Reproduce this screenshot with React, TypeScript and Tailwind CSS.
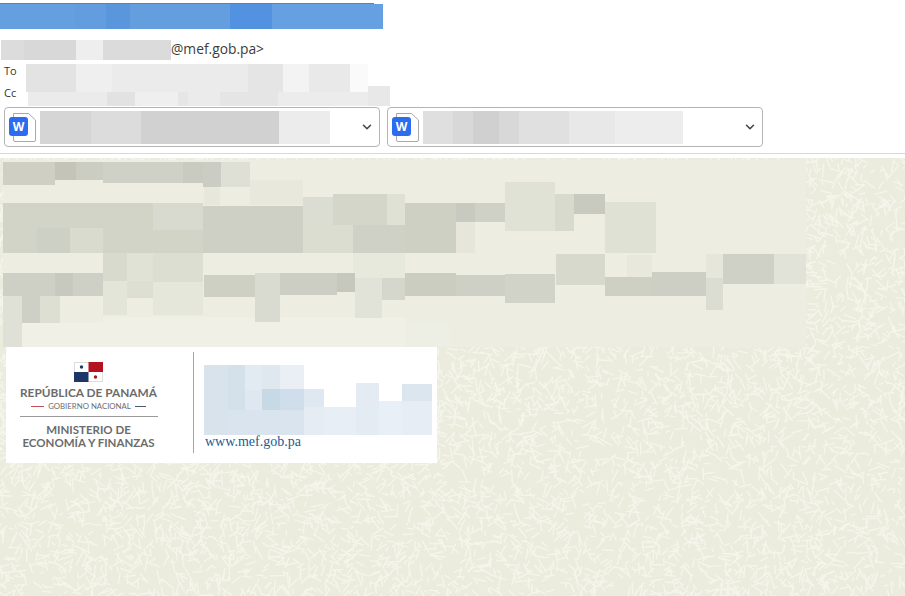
import { useMemo } from "react";
import { ChevronDown } from "lucide-react";

type Cell = [number, number, number, number, string];

function Mosaic({ w, h, cells, className = "" }: { w: number; h: number; cells: Cell[]; className?: string }) {
  return (
    <svg width={w} height={h} viewBox={`0 0 ${w} ${h}`} shapeRendering="crispEdges" className={`block shrink-0 ${className}`}>
      {cells.map(([x, y, cw, ch, c], i) => (
        <rect key={i} x={x} y={y} width={cw} height={ch} fill={c} />
      ))}
    </svg>
  );
}

function Texture() {
  const lines = useMemo(() => {
    let s = 12345;
    const r = () => {
      s = (s * 1664525 + 1013904223) >>> 0;
      return s / 4294967296;
    };
    const out: string[] = [];
    for (let i = 0; i < 9000; i++) {
      const x = r() * 925 - 10;
      const y = r() * 460 - 10;
      const a = r() * Math.PI;
      const l = 4 + r() * 11;
      out.push(`M${x.toFixed(1)} ${y.toFixed(1)}L${(x + Math.cos(a) * l).toFixed(1)} ${(y + Math.sin(a) * l).toFixed(1)}`);
    }
    return out.join("");
  }, []);
  return (
    <svg className="absolute inset-0 w-full h-full" width="905" height="438">
      <path d={lines} stroke="#f4f5eb" strokeWidth="1.4" fill="none" />
    </svg>
  );
}

function WordIcon() {
  return (
    <div className="relative w-[28px] h-[28px] shrink-0">
      <svg width="28" height="30" viewBox="0 0 28 30" className="absolute left-0 top-0">
        <path d="M4.5 0.5H19.5L26.5 7V27a1.5 1.5 0 0 1-1.5 1.5H6a1.5 1.5 0 0 1-1.5-1.5Z" fill="#fff" stroke="#a9a9a9" strokeWidth="1" />
      </svg>
      <div className="absolute left-0 top-[4px] w-[19px] h-[19px] rounded-[3px] bg-[#2b6cf0] text-white text-[12px] leading-[19px] font-bold text-center font-['Open_Sans',sans-serif]">
        W
      </div>
    </div>
  );
}

function Attachment({ cells, mosaicW, mosaicGap }: { cells: Cell[]; mosaicW: number; mosaicGap: number }) {
  return (
    <div className="relative w-[376px] h-[40px] border border-[#b4b4b4] rounded-[4px] bg-white flex items-center pl-[4px]">
      <div className="-mt-[1px]">
        <WordIcon />
      </div>
      <div style={{ marginLeft: mosaicGap }}>
        <Mosaic w={mosaicW} h={33} cells={cells} />
      </div>
      <ChevronDown className="absolute right-[5px] top-[12px] text-[#444]" size={14} strokeWidth={2.6} />
    </div>
  );
}

const banner: Cell[] = [
  [0, 1, 75, 25, "#669fe0"],
  [75, 1, 31, 25, "#639de0"],
  [106, 1, 24, 25, "#5a96dc"],
  [130, 1, 100, 25, "#649edf"],
  [230, 1, 42, 25, "#5392e0"],
  [272, 1, 111, 25, "#669fe2"],
  [0, 0, 374, 1, "#4a86c8"],
];
const sender: Cell[] = [
  [0, 0, 23, 20, "#dcdcdc"],
  [23, 0, 52, 20, "#d8d8d8"],
  [75, 0, 27, 20, "#eeeeee"],
  [102, 0, 68, 20, "#dbdbdb"],
];
const to: Cell[] = [
  [0, 0, 50, 28, "#e3e3e3"],
  [50, 0, 36, 28, "#efefef"],
  [86, 0, 136, 28, "#ebebeb"],
  [222, 0, 35, 28, "#e5e5e5"],
  [257, 0, 26, 28, "#f3f3f3"],
  [283, 0, 41, 28, "#e9e9e9"],
  [324, 0, 18, 28, "#fafafa"],
  [342, 22, 22, 6, "#e8e8e8"],
];
const cc: Cell[] = [
  [0, 0, 362, 14, "#ebebeb"],
  [79, 0, 28, 14, "#e2e2e2"],
  [107, 0, 43, 14, "#efefef"],
  [150, 0, 10, 14, "#e6e6e6"],
  [192, 0, 58, 14, "#e5e5e5"],
  [250, 0, 90, 14, "#ececec"],
  [340, 0, 22, 14, "#e8e8e8"],
];
const att1: Cell[] = [
  [0, 0, 51, 33, "#d5d5d5"],
  [51, 0, 50, 33, "#dcdcdc"],
  [101, 0, 138, 33, "#d1d1d1"],
  [239, 0, 51, 33, "#ececec"],
];
const att2: Cell[] = [
  [0, 0, 30, 33, "#dfdfdf"],
  [30, 0, 20, 33, "#d8d8d8"],
  [50, 0, 26, 33, "#d0d0d0"],
  [76, 0, 20, 33, "#d8d8d8"],
  [96, 0, 50, 33, "#e0e0e0"],
  [146, 0, 46, 33, "#e8e8e8"],
  [192, 0, 68, 33, "#ededed"],
];

// absolute page coordinates, shifted to the panel's origin (3,160)
const bodyAbs: Cell[] = [
  [3, 160, 803, 187, "#edeee1"],
  [22, 323, 383, 24, "#f0f0e6"],
  [405, 323, 45, 24, "#eeefe4"],
  [103, 317, 302, 6, "#f0f0e6"],
  [3, 162, 52, 23, "#cfcfc4"],
  [55, 162, 21, 18, "#c4c4b8"],
  [76, 162, 27, 18, "#cbccc2"],
  [103, 162, 80, 21, "#d0d1c6"],
  [183, 162, 20, 21, "#c9cac0"],
  [203, 162, 18, 25, "#cbccc3"],
  [221, 162, 29, 25, "#dee0d6"],
  [204, 187, 16, 18, "#e7e7dc"],
  [250, 180, 53, 25, "#e8e8dc"],
  [3, 203, 200, 50, "#d3d4c8"],
  [37, 228, 33, 25, "#cdd0c5"],
  [70, 228, 33, 25, "#dadbcf"],
  [153, 203, 50, 27, "#d9dacf"],
  [203, 206, 100, 47, "#cfd0c5"],
  [303, 203, 153, 50, "#d2d3c7"],
  [303, 197, 30, 28, "#dcddd2"],
  [333, 194, 54, 31, "#d5d6ca"],
  [387, 194, 18, 31, "#e0e1d5"],
  [303, 225, 50, 28, "#dcddd1"],
  [353, 225, 52, 28, "#cfd1c6"],
  [405, 203, 51, 50, "#cfd0c4"],
  [456, 203, 19, 19, "#c9cabf"],
  [475, 203, 30, 19, "#d0d1c6"],
  [456, 222, 19, 31, "#e6e6da"],
  [505, 182, 50, 49, "#e1e2d6"],
  [555, 194, 19, 37, "#d9dace"],
  [574, 194, 31, 20, "#c9cabf"],
  [605, 202, 51, 51, "#e0e1d5"],
  [103, 253, 24, 28, "#d8dace"],
  [127, 253, 26, 29, "#e1e2d6"],
  [153, 253, 50, 29, "#dcded2"],
  [353, 253, 52, 25, "#e8e9dd"],
  [3, 273, 100, 23, "#cfd0c5"],
  [55, 273, 18, 23, "#c8c9be"],
  [103, 281, 24, 34, "#e4e5d9"],
  [127, 281, 26, 17, "#dddfd3"],
  [153, 282, 50, 33, "#e6e7db"],
  [204, 275, 51, 22, "#cfd0c4"],
  [255, 273, 25, 49, "#d9dad0"],
  [280, 273, 57, 22, "#cdcec3"],
  [337, 273, 18, 19, "#c7c8bd"],
  [355, 278, 27, 40, "#e2e3d8"],
  [382, 278, 23, 22, "#d6d7cc"],
  [405, 273, 51, 23, "#cccdc1"],
  [456, 275, 49, 21, "#cfd0c5"],
  [505, 274, 50, 29, "#d2d3c8"],
  [556, 254, 49, 31, "#d8d9cd"],
  [605, 277, 47, 19, "#cfd0c4"],
  [627, 255, 25, 22, "#e8e8dc"],
  [652, 272, 54, 24, "#cecfc4"],
  [706, 254, 17, 24, "#e6e6da"],
  [706, 278, 17, 32, "#dcddd2"],
  [723, 254, 51, 30, "#d0d1c6"],
  [774, 254, 32, 30, "#e2e3d8"],
  [3, 296, 19, 51, "#e0e1d6"],
  [22, 296, 18, 27, "#cfd0c5"],
  [40, 296, 20, 27, "#dddfd3"],
];
const body: Cell[] = bodyAbs.map(([x, y, w, h, c]) => [x - 3, y - 160, w, h, c]);

const sigMosaic: Cell[] = [
  [0, 0, 228, 70, "#ffffff"],
  [0, 0, 24, 70, "#d8e3ec"],
  [24, 0, 17, 45, "#d4e1ea"],
  [24, 45, 76, 25, "#d9e4ee"],
  [41, 0, 17, 25, "#e3ebf2"],
  [58, 0, 18, 25, "#dfe8ef"],
  [76, 0, 24, 24, "#e9eff4"],
  [41, 25, 17, 20, "#dfe8f0"],
  [58, 24, 18, 21, "#c8d9e6"],
  [76, 24, 24, 21, "#cfdeea"],
  [100, 24, 20, 18, "#dfe8f0"],
  [100, 42, 20, 28, "#e5ecf3"],
  [120, 42, 32, 28, "#e8eef5"],
  [152, 18, 23, 24, "#e4ebf2"],
  [152, 42, 23, 28, "#e3ebf3"],
  [175, 36, 23, 34, "#e9eff6"],
  [198, 19, 30, 17, "#dbe6ef"],
  [198, 36, 30, 34, "#e6edf5"],
];

export default function App() {
  return (
    <div className="w-[905px] h-[596px] bg-white flex flex-col overflow-hidden font-['Open_Sans',sans-serif]">
      <header className="h-[153px] shrink-0 pt-[3px] flex flex-col">
        <Mosaic w={383} h={26} cells={banner} />
        <div className="flex items-start h-[20px] mt-[11px] pl-[1px] text-[13.8px] leading-[18px] text-[#3c3c3c]">
          <Mosaic w={170} h={20} cells={sender} />
          <span>@mef.gob.pa&gt;</span>
        </div>
        <div className="flex h-[29px] mt-[3px]">
          <span className="w-[26px] pl-[4px] text-[11px] leading-[16px] text-[#333] shrink-0">To</span>
          <Mosaic w={364} h={28} cells={to} className="mt-[1px]" />
        </div>
        <div className="flex h-[14px]">
          <span className="w-[28px] pl-[4px] text-[11px] leading-[2px] text-[#333] shrink-0">Cc</span>
          <Mosaic w={362} h={14} cells={cc} />
        </div>
        <div className="flex gap-[7px] pl-[4px] mt-[1px]">
          <Attachment cells={att1} mosaicW={290} mosaicGap={3} />
          <Attachment cells={att2} mosaicW={260} mosaicGap={3} />
        </div>
      </header>
      <div className="h-px bg-[#d9d9d9] shrink-0" />
      <main className="relative flex-1 mt-[4px] bg-[#ebecdd] overflow-hidden">
        <Texture />
        <div className="relative pt-[2px]">
          <Mosaic w={803} h={187} cells={body} className="ml-[3px]" />
          <div className="ml-[6px] w-[431px] h-[116px] bg-white flex pt-[5px]">
            <div className="w-[187px] shrink-0 flex flex-col items-center pr-[22px] text-[#6c6c6c] font-['Lato',sans-serif] font-bold pt-[10px]">
              <svg width="29" height="20" viewBox="0 0 29 20" className="block">
                <rect x="0.5" y="0.5" width="28" height="19" fill="#fff" stroke="#dddddd" />
                <rect x="14.5" width="14.5" height="10" fill="#b5121f" />
                <rect y="10" width="14.5" height="10" fill="#1c3765" />
                <circle cx="7.5" cy="5" r="1.7" fill="#1c3765" />
                <circle cx="21.5" cy="15" r="1.7" fill="#b5121f" />
              </svg>
              <div className="text-[11.85px] leading-[14px] mt-[4px] whitespace-nowrap">REPÚBLICA DE PANAMÁ</div>
              <div className="flex items-center gap-[4px] mt-[1px] h-[10px]">
                <span className="w-[13px] h-px bg-[#c0505a]" />
                <span className="text-[7.8px] leading-[10px] font-normal whitespace-nowrap">GOBIERNO NACIONAL</span>
                <span className="w-[11px] h-px bg-[#4a5a70]" />
              </div>
              <div className="w-[138px] h-px bg-[#9a9a9a] mt-[5px]" />
              <div className="text-[11.5px] leading-[13px] mt-[6px] text-center whitespace-nowrap">
                MINISTERIO DE
                <br />
                ECONOMÍA Y FINANZAS
              </div>
            </div>
            <div className="w-px h-[101px] bg-[#a5a5a5] shrink-0" />
            <div className="pl-[10px] pt-[13px]">
              <Mosaic w={228} h={70} cells={sigMosaic} />
              <div className="font-['Liberation_Serif',serif] text-[14px] leading-[14px] text-[#1a5b96] pl-[1px]">www.mef.gob.pa</div>
            </div>
          </div>
        </div>
      </main>
    </div>
  );
}
